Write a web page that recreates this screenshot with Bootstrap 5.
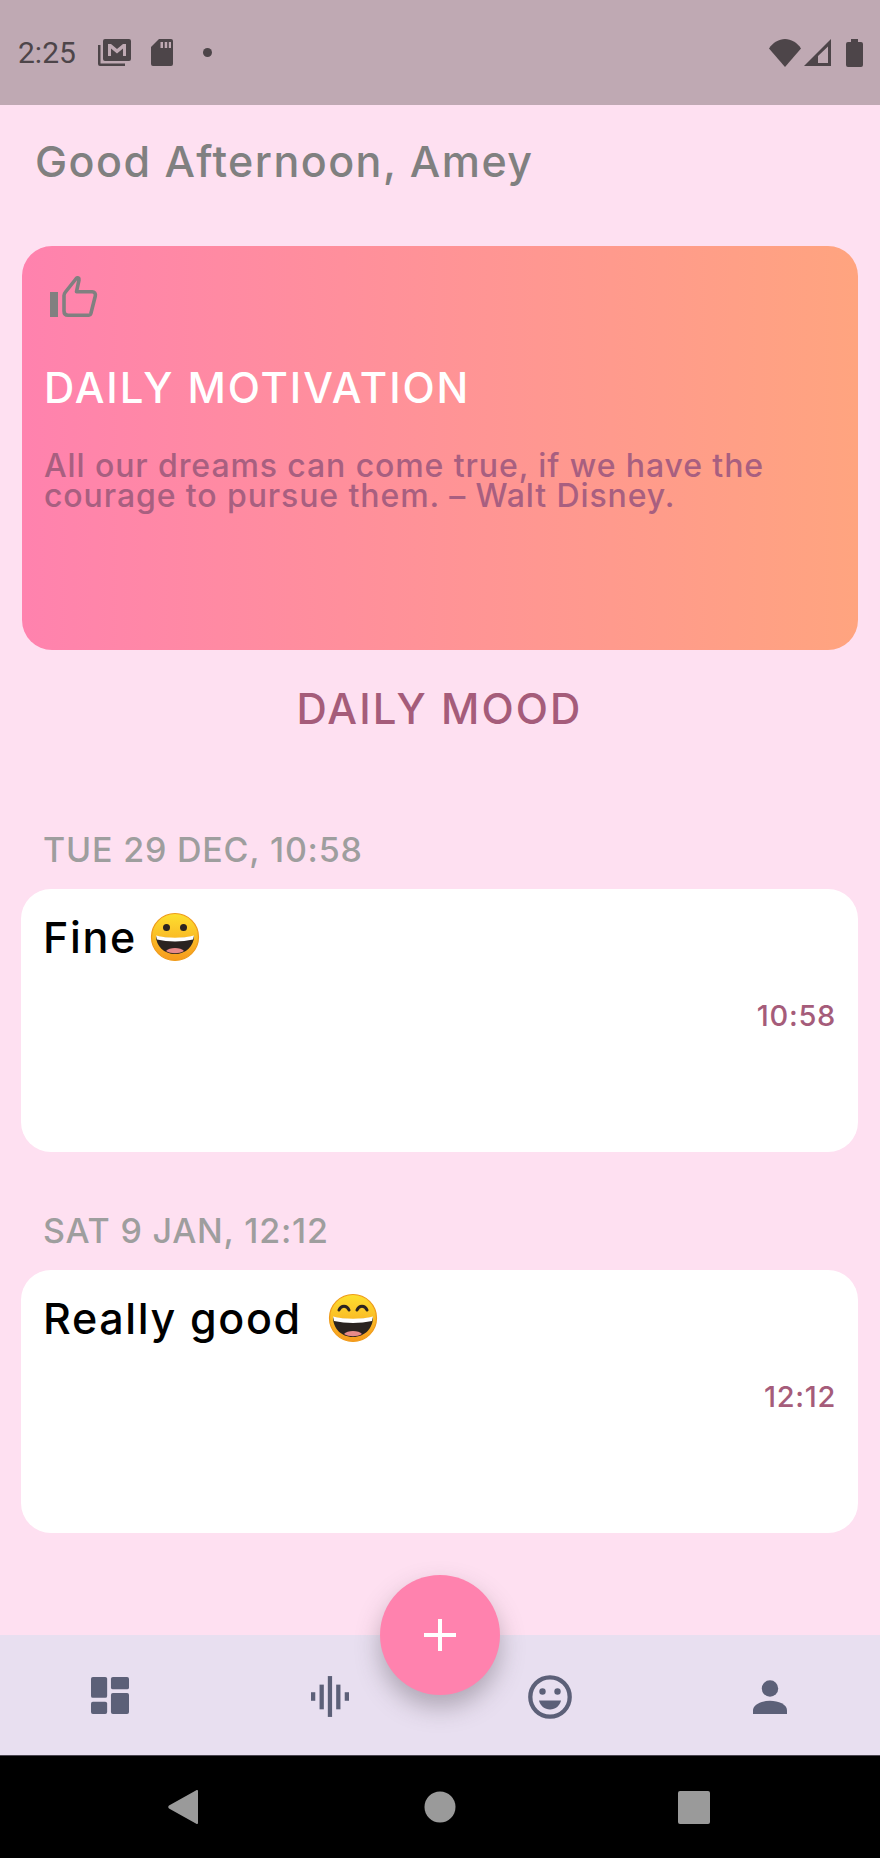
<!DOCTYPE html>
<html lang="en">
  <head>
    <meta charset="UTF-8" />
    <meta name="viewport" content="width=device-width, initial-scale=1.0" />
    <title>Daily Mood</title>
    <link href="https://cdn.jsdelivr.net/npm/bootstrap@5.3.3/dist/css/bootstrap.min.css" rel="stylesheet" />
    <style>
      html, body { height: 100%; }
      body { font-family: Inter, "Liberation Sans", sans-serif; background: #fee0f1; overflow: hidden; }
      .app-screen { width: 880px; height: 1858px; }
      .status-strip { height: 105px; background: #bfa9b3; padding: 0 17px 0 18px; color: #4d4549; flex: none; }
      .status-time { font-family: Roboto, sans-serif; font-size: 30px; line-height: 34px; width: 60px; }
      .status-left { gap: 20px; }
      .status-left .status-dot { width: 9px; height: 9px; border-radius: 50%; background: #4d4549; margin-left: 10px; }
      .wifi-glyph { margin-right: 3px; }
      .battery-glyph { margin-left: 15px; }
      .content-area { padding: 0 22px 0 21px; min-height: 0; }
      .greeting { color: #808080; font-size: 43px; line-height: 50px; font-weight: 500; margin: 31px 0 0 14px; letter-spacing: 1.45px; }
      .motivation-panel { height: 404px; margin: 60px 0 0 1px; border-radius: 30px; padding: 29px 24px 0 23px; background: linear-gradient(90deg, #ff82ae, #ffa47f); }
      .motivation-panel > svg { margin-left: 5px; }
      .motivation-title { color: #fff; font-size: 42px; line-height: 50px; margin: 44px 0 0 -1px; font-weight: 500; letter-spacing: 1.9px; }
      .motivation-quote { color: #a85f80; font-size: 32px; line-height: 30px; margin: 38px 0 0 -1px; font-weight: 500; letter-spacing: .9px; }
      .mood-heading { color: #a55c7a; font-size: 42px; line-height: 50px; margin: 34px 0 0; font-weight: 500; letter-spacing: 2.1px; }
      .entry-date { color: #9e9e9e; font-size: 34px; line-height: 40px; font-weight: 500; margin: 0 0 0 22px; letter-spacing: .8px; }
      .entry-date-first { margin-top: 96px; }
      .entry-date-next { margin-top: 59px; }
      .entry-card { height: 263px; margin-top: 19px; border-radius: 30px; padding: 0 22px 0 23px; border: 0; }
      .entry-title { color: #000; font-size: 43px; line-height: 50px; margin: 23px 0 0 -1px; gap: 13px; font-weight: 500; letter-spacing: 1.65px; }
      .entry-time { color: #a55c7a; font-size: 29px; line-height: 34px; margin-top: 37px; font-weight: 500; letter-spacing: .7px; }
      .bottom-bar { height: 120px; background: #e8dff0; flex: none; }
      .bar-slot { width: 220px; }
      .bar-slot svg, .status-strip svg { fill: currentColor; }
      .bar-slot { color: #5c6078; padding-top: 40px; }
      .add-fab { width: 120px; height: 120px; left: 380px; top: -60px; background: #ff82ae; box-shadow: 0 12px 24px rgba(70, 60, 70, .35); z-index: 2; border: 0; }
      .system-nav { height: 103px; background: #000; border-top: 1px solid #4a4550; flex: none; color: #9a9a9a; padding: 0 170px 0 168px; }
    </style>
  </head>
  <body>
    <div class="app-screen d-flex flex-column">
      <div class="status-strip d-flex align-items-center justify-content-between">
        <div class="status-left d-flex align-items-center">
          <span class="status-time">2:25</span>
          <svg width="33" height="27" viewBox="0 0 33 27">
            <path d="M0 6h2.500v18.500H27V27H2a2 2 0 0 1-2-2zM7 0h24a2 2 0 0 1 2 2v18a2 2 0 0 1-2 2H7a2 2 0 0 1-2-2V2a2 2 0 0 1 2-2zm3 5v12h3V9.500l6 5 6-5V17h3V5h-3l-6 5-6-5z" fill-rule="evenodd" />
          </svg>
          <svg width="22" height="27" viewBox="0 0 22 27">
            <path d="M8 0h12a2 2 0 0 1 2 2v23a2 2 0 0 1-2 2H2a2 2 0 0 1-2-2V8zm1.500 3v6H12V3zm4.200 0v6h2.500V3zm4.100 0v6h2.200V3z" fill-rule="evenodd" />
          </svg>
          <span class="status-dot"></span>
        </div>
        <div class="d-flex align-items-center">
          <svg width="32" height="28" viewBox="0 0 32 28" class="wifi-glyph"><path d="M0 9.500C4 3.500 10 0 16 0s12 3.500 16 9.500L16 28z" /></svg>
          <svg width="27" height="27" viewBox="0 0 27 27"><path d="M27 0v27H0zm-3 7.500L14 17v7h10z" fill-rule="evenodd" /></svg>
          <svg width="17" height="28" viewBox="0 0 17 28" class="battery-glyph"><path d="M5 0h7v3h3a2 2 0 0 1 2 2v21a2 2 0 0 1-2 2H2a2 2 0 0 1-2-2V5a2 2 0 0 1 2-2h3z" /></svg>
        </div>
      </div>

      <main class="content-area flex-grow-1">
        <h1 class="greeting">Good Afternoon, Amey</h1>

        <section class="motivation-panel">
          <svg class="d-block" width="50" height="44" viewBox="0 0 50 44">
            <rect x="0" y="17" width="8" height="25" fill="#808080" />
            <path d="M18 40.200h21c1 0 1.500-.5 1.800-1.500L45.300 21c.5-2.500-1-4.300-3-4.300H26.500L29 5c.4-2-1.500-3-2.800-1.500L15.500 17c-.8 1-1.500 2-1.500 3.500V36c0 2.500 1.500 4.200 4 4.200z" fill="none" stroke="#808080" stroke-width="3.600" stroke-linejoin="round" />
          </svg>
          <h2 class="motivation-title">DAILY MOTIVATION</h2>
          <p class="motivation-quote mb-0">All our dreams can come true, if we have the courage to pursue them. – Walt Disney.</p>
        </section>

        <h2 class="mood-heading text-center">DAILY MOOD</h2>

        <h3 class="entry-date entry-date-first">TUE 29 DEC, 10:58</h3>
        <div class="card entry-card">
          <div class="entry-title d-flex align-items-center">
            <span>Fine</span>
            <svg width="50" height="50" viewBox="0 0 50 50">
              <defs><linearGradient id="faceA" x1="0" y1="0" x2="0" y2="1"><stop offset="0" stop-color="#fde02f" /><stop offset="1" stop-color="#f79a1e" /></linearGradient></defs>
              <circle cx="25" cy="25" r="23.500" fill="url(#faceA)" stroke="#ef9b1a" stroke-width="1.200" />
              <circle cx="16.500" cy="15.500" r="3.500" fill="#2a2320" /><circle cx="33.500" cy="15.500" r="3.500" fill="#2a2320" />
              <path d="M6 24c12 3 26 3 38 0 0 10-8 18-19 18S6 34 6 24z" fill="#2a2320" />
              <path d="M6 23.500c12 3 26 3 38 0l-1 4c-11 2.500-25 2.500-36 0z" fill="#fff" />
              <path d="M16 39c3-4 15-4 18 0-5 3-13 3-18 0z" fill="#e88a8a" />
            </svg>
          </div>
          <div class="entry-time text-end">10:58</div>
        </div>

        <h3 class="entry-date entry-date-next">SAT 9 JAN, 12:12</h3>
        <div class="card entry-card">
          <div class="entry-title d-flex align-items-center">
            <span>Really good&nbsp;</span>
            <svg width="50" height="50" viewBox="0 0 50 50">
              <defs><linearGradient id="faceB" x1="0" y1="0" x2="0" y2="1"><stop offset="0" stop-color="#fde02f" /><stop offset="1" stop-color="#f79a1e" /></linearGradient></defs>
              <circle cx="25" cy="25" r="23.500" fill="url(#faceB)" stroke="#ef9b1a" stroke-width="1.200" />
              <path d="M11 17c2-5 8-5 10 0M29 17c2-5 8-5 10 0" fill="none" stroke="#2a2320" stroke-width="3" stroke-linecap="round" />
              <path d="M5 24c12 3 28 3 40 0 0 11-8 20-20 20S5 35 5 24z" fill="#2a2320" />
              <path d="M5 23.500c12 3 28 3 40 0l-1 4.500c-12 2.500-26 2.500-38 0z" fill="#fff" />
              <path d="M16 41c3-4 15-4 18 0-5 3-13 3-18 0z" fill="#e88a8a" />
            </svg>
          </div>
          <div class="entry-time text-end">12:12</div>
        </div>
      </main>

      <nav class="bottom-bar position-relative d-flex">
        <div class="bar-slot d-flex justify-content-center align-items-start">
          <svg width="38" height="40" viewBox="0 0 40 40"><rect x="0" y="1" width="17" height="22" rx="2" /><rect x="21" y="1" width="19" height="13" rx="2" /><rect x="0" y="27" width="17" height="13" rx="2" /><rect x="21" y="18" width="19" height="22" rx="2" /></svg>
        </div>
        <div class="bar-slot d-flex justify-content-center align-items-start">
          <svg width="38" height="43" viewBox="0 0 40 43"><rect x="0" y="17" width="4.500" height="9" /><rect x="9" y="9" width="4.500" height="26" /><rect x="17.700" y="0" width="4.500" height="43" /><rect x="26.500" y="9" width="4.500" height="26" /><rect x="35.500" y="17" width="4.500" height="9" /></svg>
        </div>
        <div class="bar-slot d-flex justify-content-center align-items-start">
          <svg width="44" height="44" viewBox="0 0 44 44"><circle cx="22" cy="22" r="19.700" fill="none" stroke="currentColor" stroke-width="4.300" /><circle cx="14.500" cy="16.500" r="3.200" /><circle cx="29.500" cy="16.500" r="3.200" /><path d="M11 25.500h22c-1 5-5.500 9-11 9s-10-4-11-9z" /></svg>
        </div>
        <div class="bar-slot d-flex justify-content-center align-items-start">
          <svg width="34" height="36" viewBox="0 0 36 36" class="mt-1"><circle cx="18" cy="9" r="8.700" /><path d="M0 36v-4c0-6 9-10 18-10s18 4 18 10v4z" /></svg>
        </div>
        <button type="button" class="add-fab btn position-absolute rounded-circle d-flex align-items-center justify-content-center p-0" aria-label="Add">
          <svg width="32" height="32" viewBox="0 0 32 32"><path d="M14 0h4v14h14v4H18v14h-4V18H0v-4h14z" fill="#fff" /></svg>
        </button>
      </nav>

      <div class="system-nav d-flex align-items-center justify-content-between">
        <svg width="34" height="34" viewBox="0 0 34 34"><path d="M29 0c.6 0 1 .5 1 1v32c0 .5-.4 1-1 1-.3 0-.5-.1-.7-.3L1 18.500c-1-.8-1-2.200 0-3L28.300.3c.2-.2.4-.3.700-.3z" fill="#9a9a9a" /></svg>
        <svg width="32" height="32" viewBox="0 0 32 32"><circle cx="16" cy="16" r="15.500" fill="#9a9a9a" /></svg>
        <svg width="32" height="33" viewBox="0 0 32 33"><rect width="32" height="33" rx="2" fill="#9a9a9a" /></svg>
      </div>
    </div>
    <script src="https://cdn.jsdelivr.net/npm/bootstrap@5.3.3/dist/js/bootstrap.bundle.min.js"></script>
  </body>
</html>
